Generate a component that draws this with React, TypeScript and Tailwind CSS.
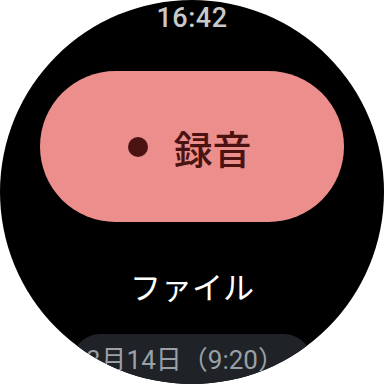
import React from "react";

export default function App() {
  return (
    <div className="w-[384px] h-[384px] bg-white">
      <div className="w-[384px] h-[384px] rounded-full bg-black overflow-hidden flex flex-col items-center">
        <div
          className="shrink-0 mt-[3px] h-[30px] leading-[30px] text-[27px] font-medium text-[#c9c9c9] tracking-[0.5px]"
          style={{ fontFamily: "Roboto, 'Noto Sans', sans-serif" }}
        >
          16:42
        </div>
        <div className="shrink-0 mt-[38px] w-[304px] h-[151px] rounded-full bg-[#ec8f8c] flex items-center justify-center">
          <div className="w-[20px] h-[20px] rounded-full bg-[#4a1210] mr-[25px] ml-[-4px]" />
          <span
            className="text-[39px] leading-[44px] text-[#4a1210] font-medium"
            style={{ fontFamily: "'Noto Sans CJK JP', sans-serif" }}
          >
            録音
          </span>
        </div>
        <div
          className="shrink-0 mt-[44px] text-[31px] leading-[40px] text-white"
          style={{ fontFamily: "'Noto Sans CJK JP', sans-serif" }}
        >
          ファイル
        </div>
        <div className="shrink-0 mt-[28px] w-[240px] h-[90px] rounded-[28px] bg-[#1f2227] pl-[14px] pt-[6px] whitespace-nowrap">
          <span
            className="text-[26px] leading-[40px] text-[#9ba0a6]"
            style={{ fontFamily: "Roboto, 'Noto Sans CJK JP', sans-serif" }}
          >
            3月14日（9:20）
          </span>
        </div>
      </div>
    </div>
  );
}
